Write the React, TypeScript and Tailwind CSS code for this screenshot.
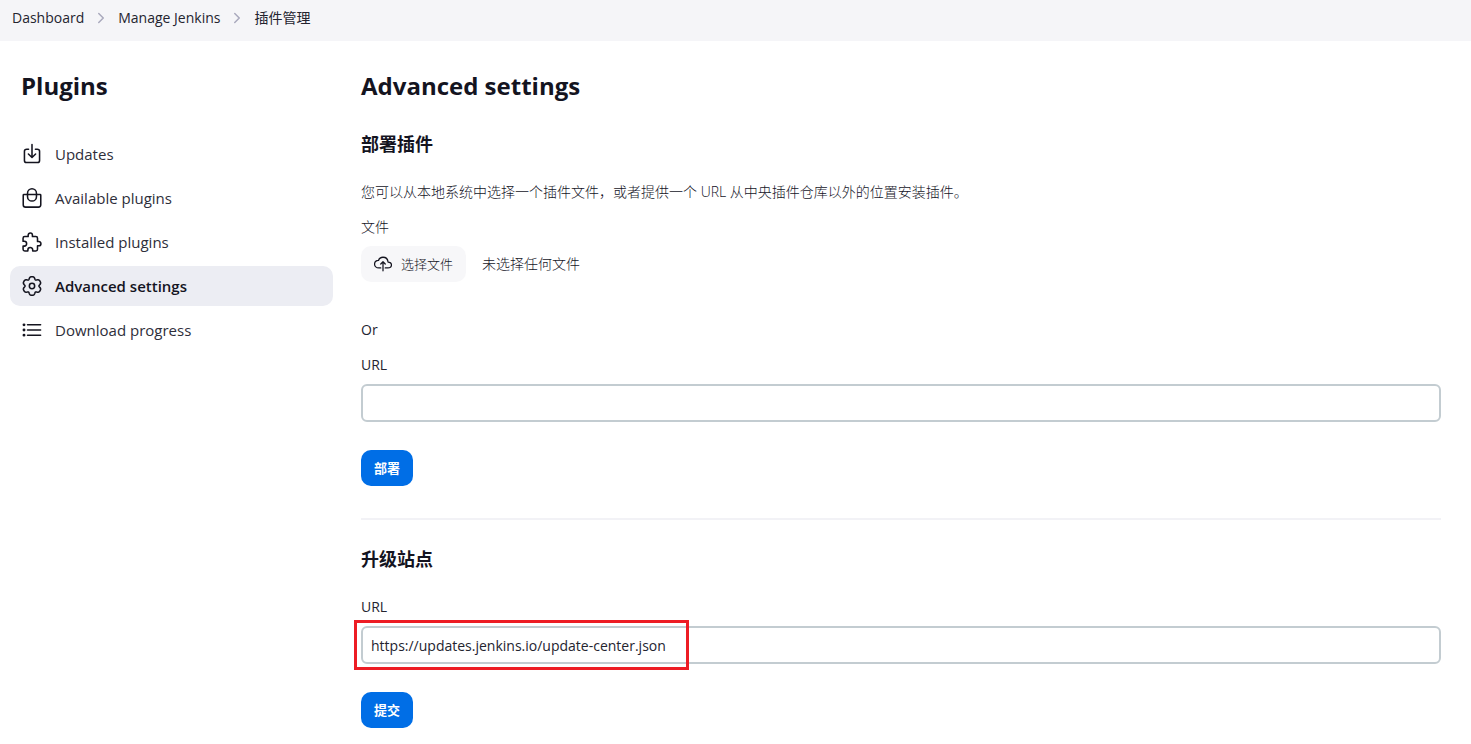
import type { ReactNode } from 'react';

const crumbs = ['Dashboard', 'Manage Jenkins', '插件管理'];

function Icon({ children, className, weight = 36 }: { children: ReactNode; className: string; weight?: number }) {
  return (
    <svg
      aria-hidden
      viewBox="0 0 512 512"
      fill="none"
      stroke="currentColor"
      strokeWidth={weight}
      strokeLinecap="round"
      strokeLinejoin="round"
      className={className}
    >
      {children}
    </svg>
  );
}

// Outline of the six-lobed gear, sampled around its centre. The second
// harmonic keeps the lobes broad and the notches between them narrow.
const gearOutline = Array.from({ length: 120 }, (_, i) => {
  const angle = (i / 120) * Math.PI * 2;
  const radius = 196 + 28 * Math.cos(6 * angle) - 7 * Math.cos(12 * angle);
  return `${(256 + radius * Math.sin(angle)).toFixed(1)},${(256 - radius * Math.cos(angle)).toFixed(1)}`;
}).join(' ');

const downloadIcon = (
  <>
    <path d="M336 144h40a56 48 0 0156 48v216a48 48 0 01-48 48H128a48 48 0 01-48-48V192a56 48 0 0156-48h40" />
    <path d="M172 256l84 80 84-80M256 36v296" />
  </>
);
const bagIcon = (
  <>
    <path d="M68 176a16 16 0 00-16 16v220c0 30.24 25.76 56 56 56h296c30.24 0 56-24.51 56-54.75V192a16 16 0 00-16-16zM152 176v-32a104 104 0 01104-104h0a104 104 0 01104 104v32" />
    <path d="M152 176v48a104 104 0 00104 104h0a104 104 0 00104-104v-48" />
  </>
);
const puzzleIcon = (
  <path d="M413.66 246.1H386a2 2 0 01-2-2v-77.24A38.86 38.86 0 00345.14 128H267.9a2 2 0 01-2-2V98.34c0-27.14-21.5-49.86-48.64-50.33a49.53 49.53 0 00-50.4 49.51V126a2 2 0 01-2 2H87.62A39.74 39.74 0 0048 167.62V238a2 2 0 002 2h26.91c29.37 0 53.68 25.48 54.09 54.85.42 29.87-23.51 57.15-53.29 57.15H50a2 2 0 00-2 2v70.38A39.74 39.74 0 0087.62 464H158a2 2 0 002-2v-20.93c0-30.28 24.75-56.35 55-57.06 30.1-.7 57 20.31 57 50.28V462a2 2 0 002 2h71.14A38.86 38.86 0 00384 425.14v-78a2 2 0 012-2h28.48c27.63 0 49.52-22.67 49.52-50.4s-23.2-48.64-50.34-48.64z" />
);
const gearIcon = (
  <>
    <circle cx="256" cy="256" r="62" />
    <polygon points={gearOutline} />
  </>
);
const listIcon = (
  <>
    <path d="M152 136h304M152 256h304M152 376h304" />
    <circle cx="70" cy="136" r="16" />
    <circle cx="70" cy="256" r="16" />
    <circle cx="70" cy="376" r="16" />
  </>
);
const cloudIcon = (
  <>
    <path d="M320 367.79h76c55 0 100-29.21 100-83.6s-53-81.47-96-83.6c-8.89-85.06-71-136.8-144-136.8-69 0-113.44 45.79-128 91.2-60 5.7-112 43.88-112 106.4s54 106.4 120 106.4h56" />
    <path d="M320 255.79l-64-64-64 64M256 448.21V207.79" />
  </>
);

const tasks: { label: string; icon: ReactNode; active?: boolean }[] = [
  { label: 'Updates', icon: downloadIcon },
  { label: 'Available plugins', icon: bagIcon },
  { label: 'Installed plugins', icon: puzzleIcon },
  { label: 'Advanced settings', icon: gearIcon, active: true },
  { label: 'Download progress', icon: listIcon },
];

const fieldClass =
  'block h-[38px] w-full rounded-md border-2 border-[#c3ccd1] bg-white px-2 text-sm font-normal text-[#24242f] outline-none focus:border-[#006ee6]';

function PrimaryButton({ children }: { children: string }) {
  return (
    <button type="submit" className="mt-7 block h-9 rounded-[10px] bg-[#006ee6] px-[13px] text-[13px] font-bold text-white">
      {children}
    </button>
  );
}

export default function App() {
  return (
    <div className="min-h-screen bg-white font-['Open_Sans','Noto_Sans_CJK_SC',sans-serif] text-sm leading-5 font-normal text-[#14141f]">
      <nav aria-label="Breadcrumb" className="h-[41px] bg-[#f5f5f8] px-3 pt-2 text-[#24242f]">
        <ol className="flex items-center">
          {crumbs.map((crumb, i) => (
            <li key={crumb} className="flex items-center">
              {i > 0 && (
                <Icon className="mx-[9px] size-4 text-[#a9a9bd]" weight={48}>
                  <path d="M184 112l144 144-144 144" />
                </Icon>
              )}
              <a href="#">{crumb}</a>
            </li>
          ))}
        </ol>
      </nav>

      <div className="flex">
        <aside className="w-[343px] shrink-0 px-[10px] pt-[27px]">
          <h2 className="px-[11px] text-2xl leading-9 font-bold">Plugins</h2>
          <ul className="mt-[30px] flex flex-col gap-1">
            {tasks.map(({ label, icon, active }) => (
              <li key={label}>
                <a
                  href="#"
                  aria-current={active ? 'page' : undefined}
                  className={
                    active
                      ? 'flex h-10 items-center gap-3 rounded-[10px] bg-[#ecedf3] px-[11px] text-[15px] font-semibold'
                      : 'flex h-10 items-center gap-3 rounded-[10px] px-[11px] text-[15px]'
                  }
                >
                  <Icon className="size-[22px] shrink-0">{icon}</Icon>
                  <span className={active ? 'text-[#14141f]' : 'text-[#2e2e3a]'}>{label}</span>
                </a>
              </li>
            ))}
          </ul>
        </aside>

        <main className="min-w-0 flex-1 pt-[27px] pr-[30px] pl-[18px] pb-4">
          <h1 className="text-2xl leading-9 font-bold">Advanced settings</h1>

          <form onSubmit={(e) => e.preventDefault()}>
            <h2 className="mt-[26px] text-lg leading-7 font-bold">部署插件</h2>
            <p className="mt-6 font-light">您可以从本地系统中选择一个插件文件，或者提供一个 URL 从中央插件仓库以外的位置安装插件。</p>
            <p className="mt-[15px] font-light">文件</p>
            <div className="mt-[9px] flex items-center gap-4 font-light">
              <button type="button" className="flex h-9 items-center gap-[9px] rounded-[10px] bg-[#f7f7f9] px-[13px] text-[13px]">
                <Icon className="size-[18px]">{cloudIcon}</Icon>
                选择文件
              </button>
              <span>未选择任何文件</span>
            </div>
            <p className="mt-[38px] text-[#24242f]">Or</p>
            <label htmlFor="plugin-url" className="mt-[15px] mb-[9px] block text-[#24242f]">URL</label>
            <input id="plugin-url" type="text" className={fieldClass} />
            <PrimaryButton>部署</PrimaryButton>
          </form>

          <hr className="mt-8 border-t-2 border-[#f2f2f6]" />

          <form onSubmit={(e) => e.preventDefault()}>
            <h2 className="mt-[25px] text-lg leading-7 font-bold">升级站点</h2>
            <label htmlFor="site-url" className="mt-6 mb-[9px] block text-[#24242f]">URL</label>
            <div className="relative">
              <input id="site-url" type="text" defaultValue="https://updates.jenkins.io/update-center.json" className={fieldClass} />
              <div className="pointer-events-none absolute -top-[6px] -left-[7px] h-[50px] w-[335px] border-3 border-[#ed1c24]" />
            </div>
            <PrimaryButton>提交</PrimaryButton>
          </form>
        </main>
      </div>
    </div>
  );
}
